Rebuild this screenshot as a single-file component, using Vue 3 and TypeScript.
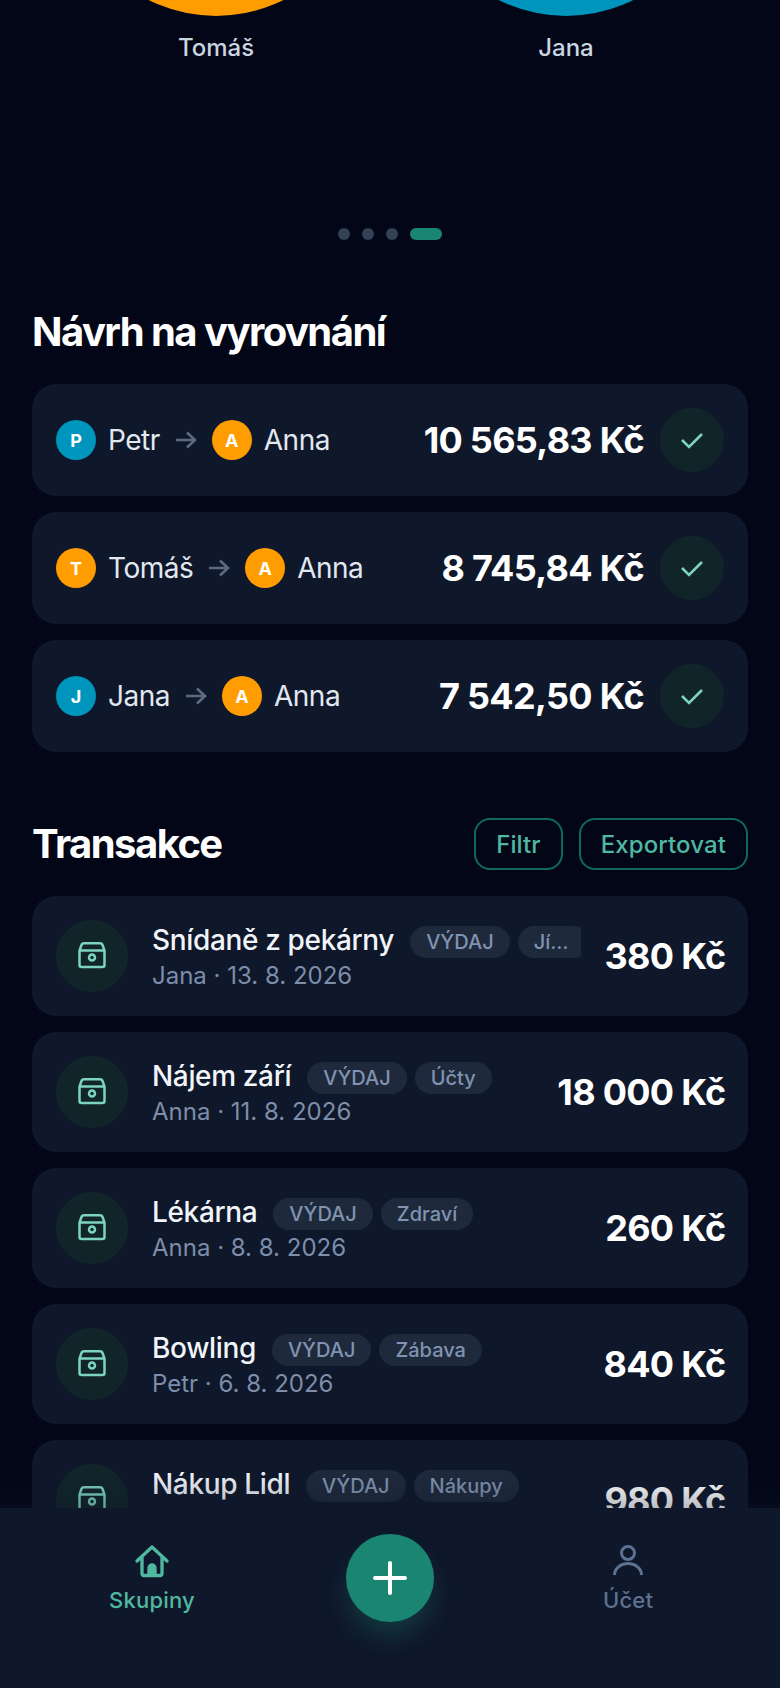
<template>
  <div class="screen">
    <div class="members">
      <div v-for="m in members" :key="m.name" class="member">
        <div class="member-circle" :class="m.color"></div>
        <div class="member-name">{{ m.name }}</div>
      </div>
    </div>

    <div class="dots">
      <span v-for="n in 3" :key="n" class="dot"></span>
      <span class="dot active"></span>
    </div>

    <h2 class="section-title">Návrh na vyrovnání</h2>
    <div class="settlements">
      <div v-for="s in settlements" :key="s.from.name" class="settlement">
        <div class="avatar" :class="s.from.color">{{ s.from.name[0] }}</div>
        <span class="person">{{ s.from.name }}</span>
        <svg class="arrow" viewBox="0 0 28 28" fill="none" stroke="#5b6b85" stroke-width="2.6">
          <path d="M4 14h19M15 6.5l8 7.5-8 7.5" />
        </svg>
        <div class="avatar" :class="s.to.color">{{ s.to.name[0] }}</div>
        <span class="person">{{ s.to.name }}</span>
        <span class="settle-amount">{{ s.amount }}</span>
        <button class="check-btn">
          <svg viewBox="0 0 28 28" fill="none" stroke="#7dd3c0" stroke-width="2.6">
            <path d="M4 14l7 7L24 8" />
          </svg>
        </button>
      </div>
    </div>

    <div class="tx-header">
      <h2 class="section-title">Transakce</h2>
      <div class="tx-actions">
        <button class="outline-btn">Filtr</button>
        <button class="outline-btn">Exportovat</button>
      </div>
    </div>
    <div class="transactions">
      <div v-for="t in transactions" :key="t.title" class="tx">
        <div class="tx-icon">
          <svg viewBox="0 0 40 40" fill="none" stroke="#7dd3c0" stroke-width="2.5">
            <path d="M7.500 14.500L9.500 9Q10 7.200 12 7.200H28Q30 7.200 30.500 9L32.500 14.500V29Q32.500 31 30.500 31H9.500Q7.500 31 7.500 29ZM7.500 14.500H32.500" />
            <circle cx="20" cy="21.500" r="3" />
          </svg>
        </div>
        <div class="tx-body">
          <div class="tx-top">
            <span class="tx-title">{{ t.title }}</span>
            <span class="tag kind">VÝDAJ</span>
            <span class="tag">{{ t.category }}</span>
          </div>
          <div class="tx-sub">{{ t.sub }}</div>
        </div>
        <div class="tx-amount">{{ t.amount }}</div>
      </div>
    </div>

    <nav class="bottom-nav">
      <div class="nav-item active">
        <svg viewBox="0 0 40 40" fill="none" stroke="currentColor" stroke-width="3.3" stroke-linecap="round" stroke-linejoin="round">
          <path d="M5 20L20 6 35 20" />
          <path d="M10 17v15.500a2 2 0 0 0 2 2h16a2 2 0 0 0 2-2V17" />
          <path d="M17 34v-7a3 3 0 0 1 6 0v7z" fill="currentColor" />
        </svg>
        <span>Skupiny</span>
      </div>
      <button class="fab">
        <svg viewBox="0 0 40 40" fill="none" stroke="#fff" stroke-width="4" stroke-linecap="round">
          <path d="M20 5v30M5 20h30" />
        </svg>
      </button>
      <div class="nav-item">
        <svg viewBox="0 0 40 40" fill="none" stroke="currentColor" stroke-width="3">
          <circle cx="20" cy="12" r="6.500" />
          <path d="M6.500 34c0-6.500 6-11.500 13.500-11.500S33.500 27.500 33.500 34" />
        </svg>
        <span>Účet</span>
      </div>
    </nav>
  </div>
</template>

<script setup lang="ts">
interface Person {
  name: string;
  color: string;
}

const anna: Person = { name: 'Anna', color: 'orange' };
const petr: Person = { name: 'Petr', color: 'blue' };
const tomas: Person = { name: 'Tomáš', color: 'orange' };
const jana: Person = { name: 'Jana', color: 'blue' };

const members = [tomas, jana];

const settlements = [
  { from: petr, to: anna, amount: '10 565,83 Kč' },
  { from: tomas, to: anna, amount: '8 745,84 Kč' },
  { from: jana, to: anna, amount: '7 542,50 Kč' },
];

const transactions = [
  { title: 'Snídaně z pekárny', category: 'Jídlo', sub: 'Jana · 13. 8. 2026', amount: '380 Kč' },
  { title: 'Nájem září', category: 'Účty', sub: 'Anna · 11. 8. 2026', amount: '18 000 Kč' },
  { title: 'Lékárna', category: 'Zdraví', sub: 'Anna · 8. 8. 2026', amount: '260 Kč' },
  { title: 'Bowling', category: 'Zábava', sub: 'Petr · 6. 8. 2026', amount: '840 Kč' },
  { title: 'Nákup Lidl', category: 'Nákupy', sub: 'Jana · 4. 8. 2026', amount: '980 Kč' },
];
</script>

<style>
html,
body {
  background: #020617;
}
</style>

<style scoped>
.screen {
  position: relative;
  height: 1688px;
  overflow: hidden;
  padding: 0 32px;
  box-sizing: border-box;
  background: #020617;
  font-family: Inter, "Noto Sans", sans-serif;
  color: #e2e8f0;
}

.members {
  display: flex;
  justify-content: center;
  gap: 50px;
  margin-top: -284px;
  padding-left: 2px;
}

.member {
  width: 300px;
  display: flex;
  flex-direction: column;
  align-items: center;
  gap: 16px;
}

.member-circle {
  width: 300px;
  height: 300px;
  border-radius: 50%;
}

.member-name {
  font-size: 24px;
  line-height: 32px;
  font-weight: 500;
  color: #cbd5e1;
}

.orange {
  background: #ff9c00;
}

.blue {
  background: #0095bd;
}

.dots {
  display: flex;
  justify-content: center;
  gap: 12px;
  margin-top: 164px;
}

.dot {
  width: 12px;
  height: 12px;
  border-radius: 6px;
  background: #334155;
}

.dot.active {
  width: 32px;
  background: #1a8570;
}

.section-title {
  margin: 0;
  font-size: 40px;
  line-height: 48px;
  font-weight: 700;
  letter-spacing: -1.55px;
  color: #fff;
}

.dots + .section-title {
  margin-top: 68px;
}

.settlements {
  display: flex;
  flex-direction: column;
  gap: 16px;
  margin-top: 28px;
}

.settlement {
  height: 112px;
  padding: 0 24px;
  box-sizing: border-box;
  display: flex;
  align-items: center;
  background: #0f172a;
  border-radius: 24px;
}

.avatar {
  width: 40px;
  height: 40px;
  flex-shrink: 0;
  border-radius: 50%;
  display: flex;
  align-items: center;
  justify-content: center;
  font-size: 18px;
  font-weight: 700;
  color: #fff;
}

.person {
  margin-left: 12px;
  font-size: 28px;
  font-weight: 400;
  letter-spacing: -0.5px;
  color: #e2e8f0;
}

.arrow {
  width: 28px;
  height: 28px;
  margin: 0 12px;
  flex-shrink: 0;
}

.settle-amount {
  margin-left: auto;
  font-size: 36px;
  font-weight: 700;
  letter-spacing: -0.7px;
  color: #fff;
}

.check-btn {
  width: 64px;
  height: 64px;
  margin-left: 16px;
  padding: 0;
  border: none;
  border-radius: 50%;
  background: #10242a;
  display: flex;
  align-items: center;
  justify-content: center;
  flex-shrink: 0;
}

.check-btn svg {
  width: 28px;
  height: 28px;
}

.tx-header {
  display: flex;
  align-items: center;
  justify-content: space-between;
  margin-top: 66px;
}

.tx-actions {
  display: flex;
  gap: 16px;
}

.outline-btn {
  height: 52px;
  padding: 0 20px;
  box-sizing: border-box;
  border: 2px solid #11695b;
  border-radius: 16px;
  background: transparent;
  font-family: inherit;
  font-size: 24px;
  font-weight: 500;
  letter-spacing: 0.1px;
  color: #4fb8a0;
}

.transactions {
  display: flex;
  flex-direction: column;
  gap: 16px;
  margin-top: 26px;
}

.tx {
  height: 120px;
  flex-shrink: 0;
  padding: 0 24px;
  box-sizing: border-box;
  display: flex;
  align-items: center;
  background: #0f172a;
  border-radius: 24px;
}

.tx-icon {
  width: 72px;
  height: 72px;
  flex-shrink: 0;
  border-radius: 50%;
  background: #10242a;
  display: flex;
  align-items: center;
  justify-content: center;
}

.tx-icon svg {
  width: 40px;
  height: 40px;
}

.tx-body {
  flex: 1;
  min-width: 0;
  margin: 0 24px;
  padding-top: 4px;
}

.tx-top {
  display: flex;
  align-items: center;
  gap: 8px;
  height: 36px;
  overflow: hidden;
}

.tx-title {
  margin-right: 8px;
  flex-shrink: 0;
  font-size: 28px;
  font-weight: 550;
  letter-spacing: -0.35px;
  white-space: nowrap;
  color: #f1f5f9;
}

.tag {
  height: 32px;
  min-width: 72px;
  margin-top: 3px;
  padding: 0 16px;
  box-sizing: border-box;
  flex: 0 1 auto;
  border-radius: 16px;
  background: #1e293b;
  font-size: 20px;
  line-height: 32px;
  font-weight: 500;
  color: #8093b0;
  overflow: hidden;
  white-space: nowrap;
  text-overflow: ellipsis;
}

.tag.kind {
  flex-shrink: 0;
}

.tx-sub {
  font-size: 24px;
  line-height: 36px;
  color: #7c8ea9;
}

.tx-amount {
  flex-shrink: 0;
  margin-right: -1.5px;
  font-size: 36px;
  font-weight: 700;
  letter-spacing: -0.7px;
  color: #fff;
}

.bottom-nav {
  position: absolute;
  left: 0;
  right: 0;
  bottom: 0;
  height: 180px;
  padding-top: 26px;
  box-sizing: border-box;
  display: grid;
  grid-template-columns: 1fr 172px 1fr;
  align-items: start;
  justify-items: center;
  background: #0f172a;
}

.bottom-nav::before {
  content: "";
  position: absolute;
  left: 0;
  right: 0;
  top: -36px;
  height: 36px;
  background: linear-gradient(to bottom, rgba(15, 23, 42, 0), rgba(15, 23, 42, 0.28));
}

.nav-item {
  display: flex;
  flex-direction: column;
  align-items: center;
  gap: 4px;
  font-size: 22px;
  line-height: 30px;
  font-weight: 500;
  letter-spacing: 0.2px;
  color: #5d7190;
}

.nav-item svg {
  width: 40px;
  height: 40px;
  margin-top: 7px;
}

.nav-item.active {
  color: #4fb8a0;
}

.fab {
  width: 88px;
  height: 88px;
  padding: 0;
  border: none;
  border-radius: 50%;
  background: #1a8570;
  box-shadow: 0 16px 28px -4px rgba(26, 133, 112, 0.35);
  display: flex;
  align-items: center;
  justify-content: center;
}

.fab svg {
  width: 40px;
  height: 40px;
}
</style>
